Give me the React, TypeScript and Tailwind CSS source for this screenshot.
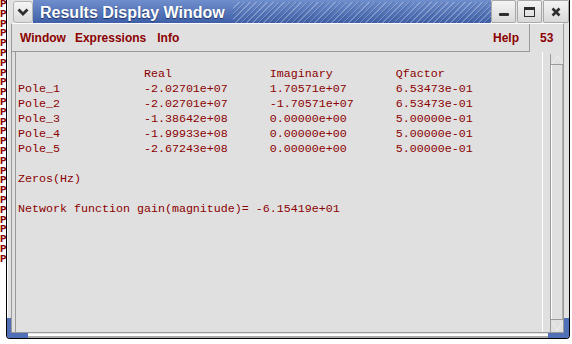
import React from "react";

const pad = (s: string, n = 18) => s.padEnd(n, " ");

const poles = [
  ["Pole_1", "-2.02701e+07", "1.70571e+07", "6.53473e-01"],
  ["Pole_2", "-2.02701e+07", "-1.70571e+07", "6.53473e-01"],
  ["Pole_3", "-1.38642e+08", "0.00000e+00", "5.00000e-01"],
  ["Pole_4", "-1.99933e+08", "0.00000e+00", "5.00000e-01"],
  ["Pole_5", "-2.67243e+08", "0.00000e+00", "5.00000e-01"],
];

const lines = [
  pad("") + pad("Real") + pad("Imaginary") + "Qfactor",
  ...poles.map((p) => pad(p[0]) + pad(p[1]) + pad(p[2]) + p[3]),
  "",
  "Zeros(Hz)",
  "",
  "Network function gain(magnitude)= -6.15419e+01",
];

function TitleButton({ children, w }: { children: React.ReactNode; w: string }) {
  return (
    <div
      className={`${w} flex items-center justify-center rounded-[2px] border border-[#a8a8a8] bg-[linear-gradient(#f4f4f4,#d9d9d9)]`}
    >
      {children}
    </div>
  );
}

function TitleBar() {
  return (
    <div className="flex h-[23px] shrink-0 pl-[6px]">
      {/* window menu button */}
      <div className="mt-[1px] flex w-[20px] items-center justify-center rounded-[3px] border border-[#b4b4b4] bg-[linear-gradient(#f6f6f6,#dadada)]">
        <svg width="12" height="8" viewBox="0 0 12 8">
          <polyline points="1.5,1.5 6,6 10.5,1.5" fill="none" stroke="#2e2e2e" strokeWidth="2.8" />
        </svg>
      </div>

      <div className="flex flex-1 items-center bg-[linear-gradient(#6f8ecd,#3f60a8)] pl-[7px] pt-[2px]">
        <span className="font-['Liberation_Sans',Arial,sans-serif] text-[16px] font-bold whitespace-nowrap text-white [text-shadow:0_1px_1px_#1d3161]">
          Results Display Window
        </span>
        <div className="ml-[8px] h-full flex-1 bg-[repeating-linear-gradient(135deg,rgba(255,255,255,0.25)_0px,rgba(255,255,255,0.25)_1px,rgba(0,0,0,0.08)_1px,rgba(0,0,0,0.08)_2px,transparent_2px,transparent_4px)]" />
      </div>

      <div className="flex w-[78px] gap-[1px]">
        <TitleButton w="w-[25px]">
          <div className="mt-[6px] h-[3px] w-[10px] rounded-[1px] bg-[#2e2e2e]" />
        </TitleButton>
        <TitleButton w="w-[25px]">
          <svg width="11" height="10" viewBox="0 0 11 10">
            <rect x="0.5" y="0.5" width="10" height="9" fill="none" stroke="#2e2e2e" />
            <rect x="0" y="0" width="11" height="3" fill="#2e2e2e" />
          </svg>
        </TitleButton>
        <TitleButton w="w-[26px]">
          <svg width="10" height="10" viewBox="0 0 10 10">
            <path d="M1.5 1.5 L8.5 8.5 M8.5 1.5 L1.5 8.5" stroke="#2e2e2e" strokeWidth="2.6" />
          </svg>
        </TitleButton>
      </div>
    </div>
  );
}

function MenuRow() {
  const item = "font-['Liberation_Sans',Arial,sans-serif] text-[12px] font-bold text-[#8b0000]";
  return (
    <div className="flex h-[28px] shrink-0">
      <div className="flex w-[518px] items-center border-r border-b border-[#9a9a9a] pl-[8px] pr-[10px]">
        <span className={item}>Window</span>
        <span className={`${item} ml-[9px]`}>Expressions</span>
        <span className={`${item} ml-[11px]`}>Info</span>
        <span className={`${item} ml-auto`}>Help</span>
      </div>
      <div className="flex flex-1 items-center pl-[10px]">
        <span className={item}>53</span>
      </div>
    </div>
  );
}

function Scrollbar() {
  return (
    <div className="mt-[2px] flex w-[13px] flex-col border-l border-[#9a9a9a]">
      <div className="flex h-[11px] items-start justify-center border-b border-[#9a9a9a] pt-[1px]">
        <svg width="11" height="9" viewBox="0 0 11 9">
          <polyline points="0.5,8.5 5.5,0.5 10.5,8.5" fill="none" stroke="#fbfbfb" strokeDasharray="1 1" />
        </svg>
      </div>
      <div className="flex-1 border-l border-r border-l-white border-r-[#b0b0b0]" />
      <div className="flex h-[13px] items-start justify-center border-t border-[#9a9a9a] pt-[2px]">
        <svg width="11" height="9" viewBox="0 0 11 9">
          <polyline points="0.5,0.5 5.5,8.5 10.5,0.5" fill="none" stroke="#fbfbfb" strokeDasharray="1 1" />
        </svg>
      </div>
    </div>
  );
}

export default function App() {
  return (
    <div className="flex h-[344px] w-[572px] overflow-hidden bg-white">
      {/* window behind, peeking out */}
      <pre className="h-[270px] w-[6px] shrink-0 overflow-hidden font-['Liberation_Mono',monospace] text-[11px] leading-[9.8px] font-bold text-[#8b0000]">
        {Array.from({ length: 27 }, () => "P").join("\n")}
      </pre>

      <div className="relative flex h-[339px] w-[564px] shrink-0 flex-col rounded-b-[4px] border-x border-b border-black bg-[#e2e2e2] shadow-[inset_0_-2px_0_#a9a9a9,inset_0_-4px_0_#ffffff,inset_1px_0_0_#ffffff]">
        <TitleBar />

        <div className="mr-[5px] mb-[5px] ml-[4px] flex flex-1 flex-col border border-t-white border-r-[#9a9a9a] border-b-[#9a9a9a] border-l-[#9a9a9a] bg-[#e0e0e0]">
          <MenuRow />
          <div className="flex flex-1 pl-[3px]">
            <pre className="w-[528px] border-r border-l border-r-white border-l-[#9a9a9a] pt-[15px] pl-[2px] font-['Liberation_Mono',monospace] text-[11.67px] leading-[15px] text-[#8b0000]">
              {lines.join("\n")}
            </pre>
            <div className="w-[7px]" />
            <Scrollbar />
          </div>
        </div>

        {/* resize corners */}
        <div className="absolute top-[318px] left-0 h-[20px] w-[4px] rounded-bl-[3px] bg-[#4f6fb6]" />
        <div className="absolute top-[333px] left-0 h-[5px] w-[21px] rounded-bl-[3px] bg-[#4f6fb6]" />
        <div className="absolute top-[318px] right-0 h-[20px] w-[5px] rounded-br-[3px] bg-[#4f6fb6]" />
        <div className="absolute top-[333px] right-0 h-[5px] w-[21px] rounded-br-[3px] bg-[#4f6fb6]" />
      </div>
    </div>
  );
}
